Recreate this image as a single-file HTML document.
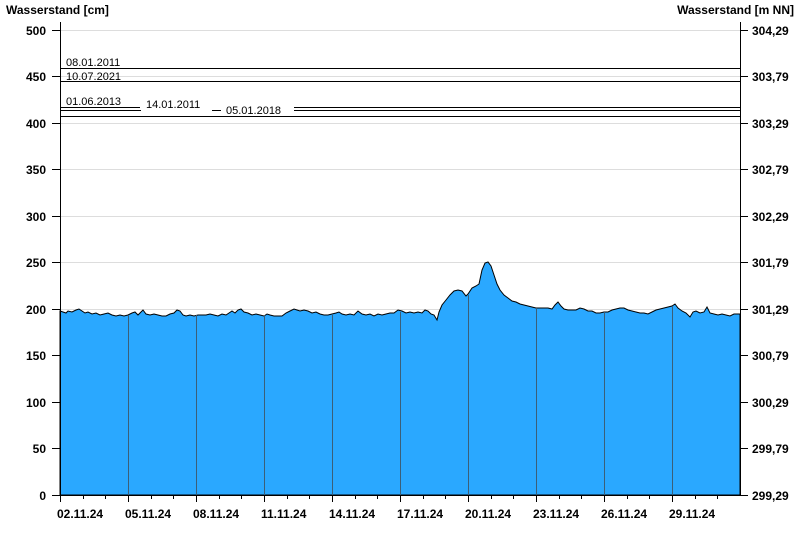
<!DOCTYPE html>
<html><head><style>
body{margin:0;background:#fff;}
svg{display:block;font-family:"Liberation Sans",Arial,sans-serif;}
.b{font-weight:bold;font-size:12px;fill:#000}
.s{font-size:11px;fill:#000}
</style></head><body>
<svg width="800" height="550" viewBox="0 0 800 550">
<rect width="800" height="550" fill="#fff"/>
<g stroke="#ddd" stroke-width="1">
<line x1="60" y1="30.5" x2="740" y2="30.5"/>
<line x1="60" y1="76.5" x2="740" y2="76.5"/>
<line x1="60" y1="123.5" x2="740" y2="123.5"/>
<line x1="60" y1="169.5" x2="740" y2="169.5"/>
<line x1="60" y1="216.5" x2="740" y2="216.5"/>
<line x1="60" y1="262.5" x2="740" y2="262.5"/>
<line x1="60" y1="309.5" x2="740" y2="309.5"/>
</g>
<polygon fill="#2aa8ff" stroke="#000" stroke-width="1" points="60,495 60,311 63,312 66,313 68,311 72,312 76,310 79,309 82,311 85,313 88,312 92,314 96,313 100,315 104,314 108,313 112,315 116,316 120,315 124,316 128,315 132,313 135,312 138,315 141,312 143,310 146,314 150,315 154,314 158,315 162,316 166,316 170,314 174,313 177,310 180,311 183,315 186,316 190,315 194,316 198,315 202,315 206,315 210,314 214,315 218,316 222,314 226,315 229,313 232,311 235,313 238,310 241,309 244,312 248,313 252,315 256,314 260,315 264,316 267,314 270,315 274,316 278,316 282,316 286,313 290,311 294,309 297,310 300,311 304,310 308,311 312,313 316,312 320,314 324,315 328,315 332,314 336,313 339,312 342,314 346,315 350,314 354,315 358,311 362,314 366,315 370,314 374,316 378,314 382,315 386,314 390,313 394,313 398,310 402,311 406,313 410,312 414,313 418,312 422,313 425,310 428,311 431,314 434,315 437,320 439,312 442,305 446,300 450,295 454,291 458,290 462,291 466,296 468,294 472,288 476,286 479,284 482,270 485,263 488,262 491,266 494,275 497,284 500,290 504,295 508,298 512,301 516,302 520,304 524,305 528,306 532,307 536,308 540,308 544,308 548,308 552,309 555,305 558,302 561,306 564,309 568,310 572,310 576,310 580,308 584,309 588,311 592,311 596,313 600,313 604,312 608,312 612,310 616,309 620,308 624,308 628,310 632,311 636,312 640,313 644,313 648,314 652,312 656,310 660,309 664,308 668,307 672,306 675,304 678,308 682,311 686,313 690,317 693,312 696,311 700,313 704,312 707,307 710,313 714,314 718,315 722,314 726,315 730,316 734,314 737,314 740,314 740,495"/>
<g stroke="#3b5f78" stroke-width="1">
<line x1="128.5" y1="315" x2="128.5" y2="495"/>
<line x1="196.5" y1="315" x2="196.5" y2="495"/>
<line x1="264.5" y1="315" x2="264.5" y2="495"/>
<line x1="332.5" y1="315" x2="332.5" y2="495"/>
<line x1="400.5" y1="312" x2="400.5" y2="495"/>
<line x1="468.5" y1="295" x2="468.5" y2="495"/>
<line x1="536.5" y1="308" x2="536.5" y2="495"/>
<line x1="604.5" y1="312" x2="604.5" y2="495"/>
<line x1="672.5" y1="306" x2="672.5" y2="495"/>
</g>
<g stroke="#000" stroke-width="1">
<line x1="60" y1="68.5" x2="740" y2="68.5"/>
<line x1="60" y1="81.5" x2="740" y2="81.5"/>
<line x1="60" y1="107.5" x2="140" y2="107.5"/>
<line x1="294" y1="107.5" x2="740" y2="107.5"/>
<line x1="60" y1="110.5" x2="141" y2="110.5"/>
<line x1="212" y1="110.5" x2="221" y2="110.5"/>
<line x1="294" y1="110.5" x2="740" y2="110.5"/>
<line x1="60" y1="116.5" x2="740" y2="116.5"/>
</g>
<rect x="221" y="111" width="73" height="4" fill="#fff"/>
<text class="s" x="66" y="66">08.01.2011</text>
<text class="s" x="66" y="80">10.07.2021</text>
<text class="s" x="66" y="105">01.06.2013</text>
<text class="s" x="146" y="108">14.01.2011</text>
<text class="s" x="226" y="114">05.01.2018</text>
<g stroke="#000" stroke-width="1">
<line x1="60.5" y1="22" x2="60.5" y2="495"/>
<line x1="740.5" y1="22" x2="740.5" y2="495"/>
<line x1="52" y1="495.5" x2="740" y2="495.5"/>
</g>
<g stroke="#000" stroke-width="1">
<line x1="52" y1="30.5" x2="60" y2="30.5"/><line x1="52" y1="76.5" x2="60" y2="76.5"/><line x1="52" y1="123.5" x2="60" y2="123.5"/><line x1="52" y1="169.5" x2="60" y2="169.5"/><line x1="52" y1="216.5" x2="60" y2="216.5"/><line x1="52" y1="262.5" x2="60" y2="262.5"/><line x1="52" y1="309.5" x2="60" y2="309.5"/><line x1="52" y1="355.5" x2="60" y2="355.5"/><line x1="52" y1="402.5" x2="60" y2="402.5"/><line x1="52" y1="448.5" x2="60" y2="448.5"/>
<line x1="740" y1="30.5" x2="748" y2="30.5"/><line x1="740" y1="76.5" x2="748" y2="76.5"/><line x1="740" y1="123.5" x2="748" y2="123.5"/><line x1="740" y1="169.5" x2="748" y2="169.5"/><line x1="740" y1="216.5" x2="748" y2="216.5"/><line x1="740" y1="262.5" x2="748" y2="262.5"/><line x1="740" y1="309.5" x2="748" y2="309.5"/><line x1="740" y1="355.5" x2="748" y2="355.5"/><line x1="740" y1="402.5" x2="748" y2="402.5"/><line x1="740" y1="448.5" x2="748" y2="448.5"/><line x1="740" y1="495.5" x2="748" y2="495.5"/>
<path d="M60.5 495v7M83.5 495v4M105.5 495v4M128.5 495v7M151.5 495v4M173.5 495v4M196.5 495v7M219.5 495v4M241.5 495v4M264.5 495v7M287.5 495v4M309.5 495v4M332.5 495v7M355.5 495v4M377.5 495v4M400.5 495v7M423.5 495v4M445.5 495v4M468.5 495v7M491.5 495v4M513.5 495v4M536.5 495v7M559.5 495v4M581.5 495v4M604.5 495v7M627.5 495v4M649.5 495v4M672.5 495v7M695.5 495v4M717.5 495v4"/>
</g>
<text class="b" x="6" y="14">Wasserstand [cm]</text>
<text class="b" x="794" y="14" text-anchor="end">Wasserstand [m NN]</text>
<g class="b" text-anchor="end">
<text x="46" y="35">500</text><text x="46" y="81">450</text><text x="46" y="128">400</text><text x="46" y="174">350</text><text x="46" y="221">300</text><text x="46" y="267">250</text><text x="46" y="314">200</text><text x="46" y="360">150</text><text x="46" y="407">100</text><text x="46" y="453">50</text><text x="46" y="500">0</text>
</g>
<g class="b">
<text x="752" y="35">304,29</text><text x="752" y="81">303,79</text><text x="752" y="128">303,29</text><text x="752" y="174">302,79</text><text x="752" y="221">302,29</text><text x="752" y="267">301,79</text><text x="752" y="314">301,29</text><text x="752" y="360">300,79</text><text x="752" y="407">300,29</text><text x="752" y="453">299,79</text><text x="752" y="500">299,29</text>
</g>
<g class="b">
<text x="57" y="518">02.11.24</text><text x="125" y="518">05.11.24</text><text x="193" y="518">08.11.24</text><text x="261" y="518">11.11.24</text><text x="329" y="518">14.11.24</text><text x="397" y="518">17.11.24</text><text x="465" y="518">20.11.24</text><text x="533" y="518">23.11.24</text><text x="601" y="518">26.11.24</text><text x="669" y="518">29.11.24</text>
</g>
</svg>
</body></html>
